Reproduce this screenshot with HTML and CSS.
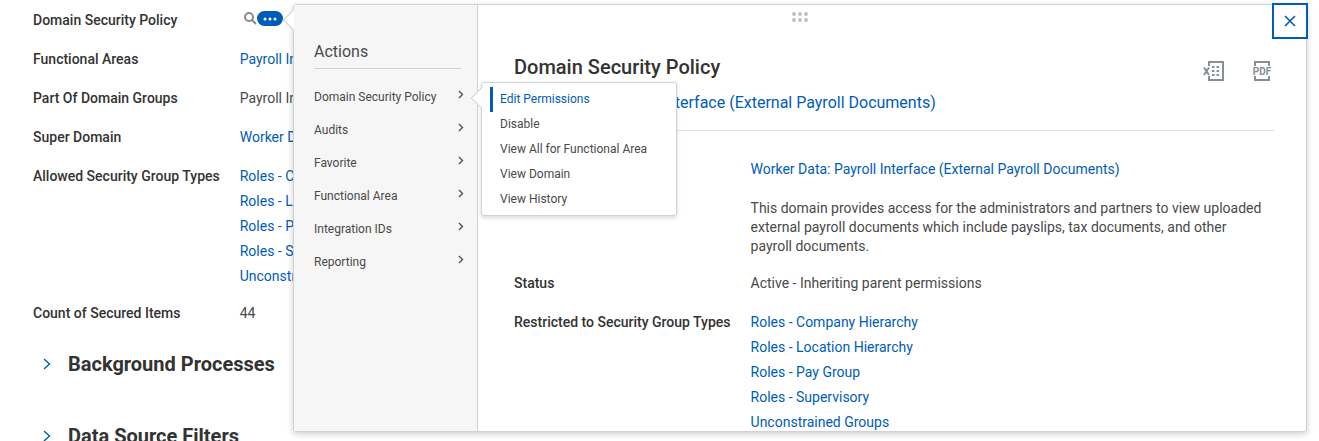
FILE: index.html
```
<!DOCTYPE html>
<html lang="en">
<head>
  <meta charset="UTF-8">
  <meta name="viewport" content="width=device-width, initial-scale=1.0">
  <title>Domain Security Policy</title>
  <link rel="stylesheet" href="styles.css">
</head>
<body>
  <main class="page">
    <dl class="fields">
      <dt>Domain Security Policy</dt>
      <dd class="tools">
        <button class="search-btn" aria-label="Search">
          <svg width="13" height="13" viewBox="0 0 13 13" fill="none" stroke="#8a8a8a" stroke-width="2"><circle cx="5" cy="5" r="4"/><path d="M8 8l4 4"/></svg>
        </button>
        <button class="related-btn" aria-label="Related actions">
          <svg width="26" height="15" viewBox="0 0 26 15" fill="#fff"><circle cx="8" cy="8" r="1.5"/><circle cx="13" cy="8" r="1.5"/><circle cx="18" cy="8" r="1.5"/></svg>
        </button>
      </dd>
      <dt>Functional Areas</dt>
      <dd><a href="#">Payroll Interface</a></dd>
      <dt>Part Of Domain Groups</dt>
      <dd>Payroll Interface</dd>
      <dt>Super Domain</dt>
      <dd><a href="#">Worker Data</a></dd>
      <dt>Allowed Security Group Types</dt>
      <dd class="links multi">
        <a href="#">Roles - Company</a>
        <a href="#">Roles - Location</a>
        <a href="#">Roles - Pay Group</a>
        <a href="#">Roles - Supervisory</a>
        <a href="#">Unconstrained</a>
      </dd>
      <dt>Count of Secured Items</dt>
      <dd>44</dd>
    </dl>

    <h2 class="section">
      <button class="section-btn">
        <svg width="8" height="12" viewBox="0 0 8 12" fill="none" stroke="#005cb9" stroke-width="1.4"><path d="M1 1l5.500 5L1 11"/></svg>
        Background Processes
      </button>
    </h2>
    <h2 class="section">
      <button class="section-btn">
        <svg width="8" height="12" viewBox="0 0 8 12" fill="none" stroke="#005cb9" stroke-width="1.4"><path d="M1 1l5.500 5L1 11"/></svg>
        Data Source Filters
      </button>
    </h2>
  </main>

  <div class="popup" role="dialog" aria-labelledby="popup-title">
    <nav class="actions">
      <h3>Actions</h3>
      <ul>
        <li>
          <button class="action">Domain Security Policy <svg class="chev" width="6" height="9" viewBox="0 0 6 9"><path d="M1 1l3.500 3.500L1 8"/></svg></button>
          <div class="submenu">
            <button class="selected">Edit Permissions</button>
            <button>Disable</button>
            <button>View All for Functional Area</button>
            <button>View Domain</button>
            <button>View History</button>
          </div>
        </li>
        <li><button class="action">Audits <svg class="chev" width="6" height="9" viewBox="0 0 6 9"><path d="M1 1l3.500 3.500L1 8"/></svg></button></li>
        <li><button class="action">Favorite <svg class="chev" width="6" height="9" viewBox="0 0 6 9"><path d="M1 1l3.500 3.500L1 8"/></svg></button></li>
        <li><button class="action">Functional Area <svg class="chev" width="6" height="9" viewBox="0 0 6 9"><path d="M1 1l3.500 3.500L1 8"/></svg></button></li>
        <li><button class="action">Integration IDs <svg class="chev" width="6" height="9" viewBox="0 0 6 9"><path d="M1 1l3.500 3.500L1 8"/></svg></button></li>
        <li><button class="action">Reporting <svg class="chev" width="6" height="9" viewBox="0 0 6 9"><path d="M1 1l3.500 3.500L1 8"/></svg></button></li>
      </ul>
    </nav>

    <div class="details">
      <header class="details-head">
        <div>
          <h1 id="popup-title">Domain Security Policy</h1>
          <a class="policy-link" href="#">Worker Data: Payroll Interface (External Payroll Documents)</a>
        </div>
        <div class="exports">
          <button aria-label="Export to Excel">
            <svg width="22" height="20" viewBox="0 0 22 20" fill="none" stroke="#868e99" stroke-width="2">
              <path d="M6 5V1h14v18H6v-4"/>
              <path d="M1 6.500l5 7.500M6 6.500l-5 7.500"/>
              <path d="M9 6h2.500M13.500 6H16M9 10h2.500M13.500 10H16M9 14h2.500M13.500 14H16"/>
            </svg>
          </button>
          <button aria-label="Export to PDF">
            <svg width="20" height="20" viewBox="0 0 20 20" fill="none" stroke="#868e99" stroke-width="2">
              <path d="M3 5V1h14v4M3 15v4h14v-4"/>
              <text class="pdf-text" x="10" y="14" text-anchor="middle">PDF</text>
            </svg>
          </button>
        </div>
      </header>

      <dl class="fields">
        <dt>Domain</dt>
        <dd><a href="#">Worker Data: Payroll Interface (External Payroll Documents)</a></dd>
        <dt>Description</dt>
        <dd class="multi">This domain provides access for the administrators and partners to view uploaded external payroll documents which include payslips, tax documents, and other payroll documents.</dd>
        <dt>Status</dt>
        <dd>Active - Inheriting parent permissions</dd>
        <dt>Restricted to Security Group Types</dt>
        <dd class="links multi">
          <a href="#">Roles - Company Hierarchy</a>
          <a href="#">Roles - Location Hierarchy</a>
          <a href="#">Roles - Pay Group</a>
          <a href="#">Roles - Supervisory</a>
          <a href="#">Unconstrained Groups</a>
        </dd>
      </dl>
    </div>

    <div class="drag-handle">
      <svg width="16" height="10" viewBox="0 0 16 10" fill="#bdbdbd"><circle cx="2" cy="2" r="1.900"/><circle cx="8" cy="2" r="1.900"/><circle cx="14" cy="2" r="1.900"/><circle cx="2" cy="8" r="1.900"/><circle cx="8" cy="8" r="1.900"/><circle cx="14" cy="8" r="1.900"/></svg>
    </div>
    <button class="close-btn" aria-label="Close">
      <svg width="12" height="12" viewBox="0 0 12 12" fill="none" stroke="#005cb9" stroke-width="1.6"><path d="M1 1l10 10M11 1L1 11"/></svg>
    </button>
  </div>
</body>
</html>
```
FILE: styles.css
```
* {
  box-sizing: border-box;
}

body {
  margin: 0;
  height: 100vh;
  overflow: hidden;
  position: relative;
  background: #fff;
  color: #494949;
  font-family: Roboto, sans-serif;
  font-size: 14px;
  line-height: 19px;
}

h1, h2, h3, ul, dl, dd {
  margin: 0;
  padding: 0;
}

button {
  display: flex;
  align-items: center;
  padding: 0;
  border: none;
  background: none;
  color: inherit;
  font: inherit;
  cursor: pointer;
}

a {
  color: #005cb9;
  text-decoration: none;
}

/* label / value list */
.fields {
  display: grid;
  grid-template-columns: max-content 1fr;
  gap: 20px;
}

.fields dt {
  color: #333;
  font-weight: 500;
}

.links {
  display: flex;
  flex-direction: column;
  align-items: flex-start;
  gap: 6px;
}

.multi {
  margin-bottom: -2px;
}

/* page behind the popup */
.page {
  padding: 11px 33px 0;
}

.tools {
  display: flex;
  align-items: center;
  padding: 0 0 4px 4px;
}

.related-btn {
  height: 15px;
  border-radius: 8px;
  background: #005cb9;
}

.section {
  margin: 29px 0 48px 10px;
  color: #333;
  font-size: 20px;
  font-weight: 700;
  line-height: 24px;
}

.section-btn {
  gap: 17px;
}

.section + .section {
  margin-top: 0;
}

/* popup */
.popup {
  position: absolute;
  top: 4px;
  left: 293px;
  right: 12px;
  display: flex;
  border: 1px solid #ced3d9;
  border-radius: 3px;
  background: #fff;
  box-shadow: 0 2px 6px rgba(0, 0, 0, 0.2);
}

.popup::before,
.submenu::before {
  content: '';
  position: absolute;
  width: 15px;
  height: 15px;
  background: #fff;
  border-left: 1px solid #ced3d9;
  border-bottom: 1px solid #ced3d9;
  transform: rotate(45deg);
  top: 7px;
  left: -8px;
}

.actions {
  position: relative;
  flex: none;
  width: 184px;
  padding: 35px 16px 0 20px;
  border-right: 1px solid #ced3d9;
  background: #f6f6f6;
}

.actions h3 {
  padding-bottom: 4px;
  margin-bottom: 12px;
  border-bottom: 1px solid #ced3d9;
  font-size: 16px;
  font-weight: 400;
  line-height: 24px;
}

.actions ul {
  list-style: none;
}

.actions li {
  position: relative;
}

.action {
  justify-content: space-between;
  width: 100%;
  height: 33px;
  font-size: 12px;
}

.chev {
  margin: 0 -3px 6px 0;
  fill: none;
  stroke: #494949;
  stroke-width: 1.3;
}

.submenu {
  position: absolute;
  z-index: 2;
  top: 1px;
  left: 167px;
  width: 196px;
  padding: 4px 8px 3px;
  border: 1px solid #ced3d9;
  border-radius: 3px;
  background: #fff;
  box-shadow: 0 2px 4px rgba(0, 0, 0, 0.15);
}

.submenu button {
  position: relative;
  width: 100%;
  height: 25px;
  padding-left: 7px;
  border-left: 3px solid transparent;
  font-size: 12px;
}

.submenu .selected {
  border-left-color: #005cb9;
  color: #005cb9;
}

.details {
  flex: 1;
  min-width: 0;
  padding: 50px 32px 1px 36px;
}

.details .fields {
  padding-right: 8px;
}

.details-head {
  display: flex;
  justify-content: space-between;
  align-items: flex-start;
  padding-bottom: 15px;
  margin-bottom: 29px;
  border-bottom: 1px solid #dfe2e6;
}

.details-head h1 {
  margin-bottom: 12px;
  color: #333;
  font-size: 20px;
  font-weight: 500;
  line-height: 24px;
}

.policy-link {
  display: block;
  font-size: 16px;
  line-height: 24px;
}

.exports {
  display: flex;
  gap: 27px;
  padding: 6px 2px 0 0;
}

.pdf-text {
  fill: #868e99;
  stroke: none;
  font-size: 10px;
  font-weight: 700;
}

.drag-handle {
  position: absolute;
  top: 7px;
  left: 0;
  right: 0;
  display: flex;
  justify-content: center;
}

.close-btn {
  position: absolute;
  top: -2px;
  right: -2px;
  justify-content: center;
  width: 36px;
  height: 36px;
  border: 2px solid #005cb9;
  background: #fff;
}
```
